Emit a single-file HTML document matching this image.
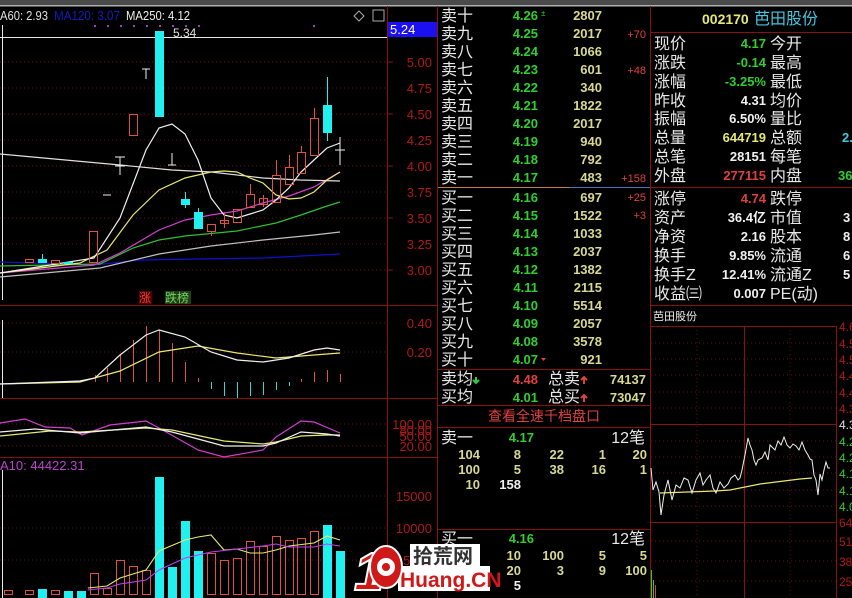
<!DOCTYPE html>
<html><head><meta charset="utf-8"><style>
html,body{margin:0;padding:0;background:#000;width:852px;height:598px;overflow:hidden}
svg{display:block}
text{font-family:"Liberation Sans","Noto Sans CJK SC",sans-serif}
.cn{font-size:16px;fill:#e8e8e8}
.g{fill:#2fcf2f;font-weight:bold;font-size:13px}
.y{fill:#d8d890;font-weight:bold;font-size:13px}
.r{fill:#e04040;font-size:11px}
.ax{fill:#b01818;font-size:13px}
.w{fill:#f0f0f0;font-weight:bold;font-size:13px}
</style></head><body>
<svg width="852" height="598" viewBox="0 0 852 598" xmlns="http://www.w3.org/2000/svg">
<rect x="0" y="0" width="852" height="598" fill="#000"/>
<rect x="0" y="0" width="852" height="5" fill="#4a4a4a"/>
<rect x="0" y="5" width="852" height="1.5" fill="#b0b0b0"/>

<!-- ========== LEFT CHART ========== -->
<g stroke="#8a1010" stroke-width="1">
<line x1="387.5" y1="6" x2="387.5" y2="598"/>
<line x1="437.5" y1="6" x2="437.5" y2="598"/>
<line x1="0" y1="305.5" x2="437" y2="305.5"/>
<line x1="0" y1="398.5" x2="437" y2="398.5"/>
<line x1="0" y1="457.5" x2="437" y2="457.5"/>
</g>
<g stroke="#6a1010" stroke-dasharray="1,3">
<line x1="0" y1="62" x2="387" y2="62"/><line x1="0" y1="88" x2="387" y2="88"/>
<line x1="0" y1="114" x2="387" y2="114"/><line x1="0" y1="140" x2="387" y2="140"/>
<line x1="0" y1="166" x2="387" y2="166"/><line x1="0" y1="192" x2="387" y2="192"/>
<line x1="0" y1="218" x2="387" y2="218"/><line x1="0" y1="244" x2="387" y2="244"/>
<line x1="0" y1="270" x2="387" y2="270"/>
<line x1="0" y1="323" x2="387" y2="323"/><line x1="0" y1="352" x2="387" y2="352"/>
<line x1="0" y1="424" x2="387" y2="424"/><line x1="0" y1="446" x2="387" y2="446"/>
<line x1="0" y1="496" x2="387" y2="496"/><line x1="0" y1="528" x2="387" y2="528"/><line x1="0" y1="560" x2="387" y2="560"/>
</g>
<g stroke="#8a1010"><line x1="387" y1="62" x2="393" y2="62"/><line x1="387" y1="114" x2="393" y2="114"/><line x1="387" y1="166" x2="393" y2="166"/><line x1="387" y1="218" x2="393" y2="218"/><line x1="387" y1="270" x2="393" y2="270"/></g>

<text x="0" y="20" fill="#e0e0e0" font-size="13" textLength="48" lengthAdjust="spacingAndGlyphs">A60: 2.93</text>
<text x="54" y="20" fill="#1818c0" font-size="13" textLength="66" lengthAdjust="spacingAndGlyphs">MA120: 3.07</text>
<text x="126" y="20" fill="#f0f0f0" font-size="13" textLength="64" lengthAdjust="spacingAndGlyphs">MA250: 4.12</text>
<g fill="none" stroke="#aaa"><path d="M359 11 l5 5 -5 5 -5 -5z"/><rect x="373" y="10" width="11" height="11"/></g>
<g fill="#a040c0"><rect x="94" y="25" width="2" height="2"/><rect x="107" y="25" width="2" height="2"/><rect x="120" y="25" width="2" height="2"/><rect x="133" y="25" width="2" height="2"/><rect x="146" y="25" width="2" height="2"/><rect x="159" y="25" width="2" height="2"/><rect x="172" y="25" width="2" height="2"/><rect x="185" y="25" width="2" height="2"/><rect x="198" y="25" width="2" height="2"/><rect x="313" y="25" width="2" height="2"/></g>
<line x1="0" y1="37.5" x2="387" y2="37.5" stroke="#e8e8e8"/>
<rect x="388" y="22" width="49" height="15" fill="#1a10f0"/>
<text x="390" y="34" fill="#fff" font-size="13">5.24</text>
<text x="173" y="37" fill="#e0e0e0" font-size="12">5.34</text>
<line x1="2.5" y1="25" x2="2.5" y2="300" stroke="#e8e8e8"/>
<line x1="2.5" y1="320" x2="2.5" y2="398" stroke="#e8e8e8"/>
<line x1="2.5" y1="470" x2="2.5" y2="598" stroke="#e8e8e8"/>

<g class="ax" text-anchor="end">
<text x="432" y="67">5.00</text><text x="432" y="93">4.75</text><text x="432" y="119">4.50</text><text x="432" y="145">4.25</text><text x="432" y="171">4.00</text><text x="432" y="197">3.75</text><text x="432" y="223">3.50</text><text x="432" y="249">3.25</text><text x="432" y="275">3.00</text>
<text x="432" y="328">0.40</text><text x="432" y="357">0.20</text>
<text x="432" y="429">100.00</text><text x="432" y="435">80.00</text><text x="432" y="441">50.00</text><text x="432" y="451">20.00</text>
<text x="432" y="501">15000</text><text x="432" y="533">10000</text><text x="432" y="565">5000</text>
</g>

<g fill="none" stroke-width="1.2">
<polyline stroke="#1010d0" points="0,262 94,265 140,260 200,259 263,258 340,254"/>
<polyline stroke="#c0c0c0" points="0,277 100,268 159,254 211,246 263,240 314,235 340,232"/>
<polyline stroke="#30c030" points="0,266 100,264 133,248 159,240 185,236 237,231 276,223 301,215 327,206 340,202"/>
<polyline stroke="#d040d0" points="0,273 94,265 120,253 159,230 185,220 211,215 237,211 263,203 289,196 314,187 340,172"/>
<polyline stroke="#e0e0e0" points="0,154 120,165 172,170 211,172 263,178 300,180 340,181"/>
<polyline stroke="#e8e870" points="0,273 80,263 107,250 133,215 159,190 185,178 211,172 224,171 237,172 250,178 263,183 276,195 289,199 301,198 314,192 327,180 340,172"/>
<polyline stroke="#f0f0f0" points="0,273 94,258 120,218 146,150 159,128 172,124 185,134 198,160 211,198 224,215 237,218 250,214 263,210 276,200 289,188 301,172 314,160 327,148 340,143"/>
</g>
<g fill="none" stroke="#e05040" stroke-width="1">
<rect x="25.5" y="259.5" width="8" height="3"/><rect x="51.5" y="260.5" width="8" height="3"/>
<rect x="89.5" y="231.5" width="8" height="31"/>
<rect x="129.5" y="114.5" width="8" height="21"/>
<rect x="207.5" y="224.5" width="8" height="7"/><line x1="211.5" y1="231" x2="211.5" y2="236"/>
<rect x="220.5" y="220.5" width="8" height="3"/><line x1="224.5" y1="212" x2="224.5" y2="228"/>
<rect x="233.5" y="209.5" width="8" height="13"/>
<rect x="246.5" y="194.5" width="8" height="13"/><line x1="250.5" y1="184" x2="250.5" y2="194"/>
<rect x="259.5" y="198.5" width="8" height="6"/><line x1="263.5" y1="195" x2="263.5" y2="207"/>
<rect x="272.5" y="175.5" width="8" height="27"/><line x1="276.5" y1="160" x2="276.5" y2="175"/>
<rect x="285.5" y="167.5" width="8" height="17"/><line x1="289.5" y1="155" x2="289.5" y2="167"/>
<rect x="297.5" y="152.5" width="8" height="21"/><line x1="301.5" y1="146" x2="301.5" y2="152"/>
<rect x="310.5" y="118.5" width="8" height="37"/><line x1="314.5" y1="108" x2="314.5" y2="118"/>
</g>
<g fill="#20f0f0">
<rect x="38" y="259" width="9" height="4"/><line x1="42.5" y1="254" x2="42.5" y2="259" stroke="#20f0f0"/>
<rect x="64" y="262" width="9" height="2"/>
<rect x="155" y="31" width="9" height="86"/>
<rect x="181" y="199" width="9" height="6"/><line x1="185.5" y1="192" x2="185.5" y2="208" stroke="#20f0f0"/>
<rect x="194" y="212" width="9" height="17"/><line x1="198.5" y1="208" x2="198.5" y2="212" stroke="#20f0f0"/>
<rect x="323" y="105" width="9" height="28"/><line x1="327.5" y1="77" x2="327.5" y2="141" stroke="#20f0f0"/>
</g>
<g stroke="#f0f0f0" fill="none">
<path d="M103 195h8"/><path d="M115 157h10M120 157v18M115 166h10"/><path d="M142 69h8M146 69v10"/><path d="M168 165h8M172 153v12"/><path d="M335 150h10M340 137v28"/>
</g>
<rect x="139" y="291" width="13" height="13" fill="#500000"/><text x="139" y="302" fill="#e04040" font-size="12">涨</text>
<rect x="165" y="291" width="26" height="13" fill="#204010"/><text x="165" y="302" fill="#70d070" font-size="12">跌榜</text>

<g stroke="#e05040">
<line x1="95.5" y1="382" x2="95.5" y2="375"/><line x1="107.5" y1="382" x2="107.5" y2="368"/><line x1="120.5" y1="382" x2="120.5" y2="354"/><line x1="133.5" y1="382" x2="133.5" y2="340"/><line x1="146.5" y1="382" x2="146.5" y2="326"/><line x1="159.5" y1="382" x2="159.5" y2="330"/><line x1="172.5" y1="382" x2="172.5" y2="343"/><line x1="185.5" y1="382" x2="185.5" y2="362"/><line x1="198.5" y1="382" x2="198.5" y2="378"/>
<line x1="301.5" y1="382" x2="301.5" y2="379"/><line x1="314.5" y1="382" x2="314.5" y2="372"/><line x1="327.5" y1="382" x2="327.5" y2="370"/><line x1="340.5" y1="382" x2="340.5" y2="374"/>
</g>
<g stroke="#30d8d8">
<line x1="211.5" y1="382" x2="211.5" y2="389"/><line x1="224.5" y1="382" x2="224.5" y2="396"/><line x1="237.5" y1="382" x2="237.5" y2="398"/><line x1="250.5" y1="382" x2="250.5" y2="396"/><line x1="263.5" y1="382" x2="263.5" y2="395"/><line x1="276.5" y1="382" x2="276.5" y2="390"/><line x1="289.5" y1="382" x2="289.5" y2="386"/>
</g>
<g fill="none" stroke-width="1.2">
<polyline stroke="#e8e870" points="0,384 80,382 120,371 159,352 198,346 237,353 276,358 314,355 340,353"/>
<polyline stroke="#f0f0f0" points="0,384 80,381 95,378 120,355 146,335 159,330 185,337 211,352 237,360 263,362 289,358 314,350 327,348 340,350"/>
</g>
<g fill="none" stroke-width="1.2">
<polyline stroke="#d040d0" points="0,423 25,419 45,427 70,428 82,435 110,425 146,421 159,428 198,450 224,457 263,450 276,437 301,421 314,422 340,433"/>
<polyline stroke="#e8e870" points="0,436 50,431 80,432 146,428 172,430 224,441 263,444 276,442 301,436 327,435 340,435"/>
<polyline stroke="#f0f0f0" points="0,432 35,429 80,433 146,427 172,432 224,446 263,446 276,443 301,432 327,434 340,436"/>
</g>
<text x="0" y="470" fill="#c040d0" font-size="13">A10: 44422.31</text>
<g fill="none" stroke="#e05040">
<rect x="4.5" y="590.5" width="8" height="4"/><rect x="25.5" y="590.5" width="8" height="4"/><rect x="51.5" y="590.5" width="8" height="4"/>
<rect x="90.5" y="573.5" width="8" height="21"/><rect x="103.5" y="588.5" width="8" height="6"/><rect x="116.5" y="560.5" width="8" height="34"/><rect x="129.5" y="566.5" width="8" height="28"/><rect x="142.5" y="570.5" width="8" height="24"/>
<rect x="207.5" y="553.5" width="8" height="41"/><rect x="220.5" y="560.5" width="8" height="34"/><rect x="233.5" y="558.5" width="8" height="36"/><rect x="246.5" y="541.5" width="8" height="53"/><rect x="259.5" y="546.5" width="8" height="48"/><rect x="272.5" y="536.5" width="8" height="58"/><rect x="285.5" y="540.5" width="8" height="54"/><rect x="297.5" y="538.5" width="8" height="56"/><rect x="310.5" y="531.5" width="8" height="63"/>
</g>
<g fill="#20f0f0">
<rect x="38" y="589" width="9" height="9"/><rect x="64" y="591" width="9" height="7"/><rect x="77" y="591" width="9" height="7"/>
<rect x="155" y="477" width="9" height="121"/><rect x="168" y="567" width="9" height="31"/><rect x="181" y="521" width="9" height="77"/><rect x="194" y="551" width="9" height="47"/><rect x="323" y="525" width="9" height="73"/><rect x="336" y="551" width="9" height="47"/>
</g>
<g fill="none" stroke-width="1.1">
<polyline stroke="#e8e870" points="88,588 107,586 120,578 146,570 159,551 185,540 198,537 211,535 224,550 237,549 250,553 263,553 276,550 289,546 314,543 327,536 340,540"/>
<polyline stroke="#c040f0" points="88,590 107,588 120,584 146,580 159,570 185,558 211,552 237,549 263,546 276,544 289,547 314,547 327,544 340,546"/>
</g>

<!-- ========== ORDER BOOK ========== -->
<g stroke="#8a1010"><line x1="650.5" y1="6" x2="650.5" y2="598"/><line x1="438" y1="369.5" x2="650" y2="369.5"/><line x1="438" y1="405.5" x2="650" y2="405.5"/><line x1="438" y1="427.5" x2="650" y2="427.5"/><line x1="438" y1="529.5" x2="650" y2="529.5"/></g>
<line x1="438" y1="187.5" x2="570" y2="187.5" stroke="#c08040"/><line x1="570" y1="187.5" x2="650" y2="187.5" stroke="#5070c0"/>
<g class="cn">
<text x="441" y="21">卖十</text><text x="441" y="39">卖九</text><text x="441" y="57">卖八</text><text x="441" y="75">卖七</text><text x="441" y="93">卖六</text><text x="441" y="111">卖五</text><text x="441" y="129">卖四</text><text x="441" y="147">卖三</text><text x="441" y="165">卖二</text><text x="441" y="183">卖一</text>
<text x="441" y="203">买一</text><text x="441" y="221">买二</text><text x="441" y="239">买三</text><text x="441" y="257">买四</text><text x="441" y="275">买五</text><text x="441" y="293">买六</text><text x="441" y="311">买七</text><text x="441" y="329">买八</text><text x="441" y="347">买九</text><text x="441" y="365">买十</text>
<text x="441" y="384">卖均</text><text x="441" y="402">买均</text>
<text x="548" y="384">总卖</text><text x="548" y="402">总买</text>
<text x="441" y="443">卖一</text><text x="441" y="544">买一</text>
<text x="645" y="443" text-anchor="end">12笔</text><text x="645" y="544" text-anchor="end">12笔</text>
</g>
<g class="g" text-anchor="end">
<text x="538" y="20">4.26</text><text x="538" y="38">4.25</text><text x="538" y="56">4.24</text><text x="538" y="74">4.23</text><text x="538" y="92">4.22</text><text x="538" y="110">4.21</text><text x="538" y="128">4.20</text><text x="538" y="146">4.19</text><text x="538" y="164">4.18</text><text x="538" y="182">4.17</text>
<text x="538" y="202">4.16</text><text x="538" y="220">4.15</text><text x="538" y="238">4.14</text><text x="538" y="256">4.13</text><text x="538" y="274">4.12</text><text x="538" y="292">4.11</text><text x="538" y="310">4.10</text><text x="538" y="328">4.09</text><text x="538" y="346">4.08</text><text x="538" y="364">4.07</text>
<text x="538" y="402">4.01</text><text x="534" y="442">4.17</text><text x="534" y="543">4.16</text>
</g>
<text x="538" y="384" text-anchor="end" fill="#e04040" font-weight="bold" font-size="13">4.48</text>
<text x="541" y="16" fill="#2fcf2f" font-size="8">±</text>
<path d="M541 358h5l-2.5 3z" fill="#e04040"/>
<path d="M476 377v6M473 380l3 3 3-3" stroke="#2fcf2f" stroke-width="2" fill="none"/>
<path d="M584 384v-7M581 380l3-3 3 3" stroke="#e04040" stroke-width="2" fill="none"/>
<path d="M584 402v-7M581 398l3-3 3 3" stroke="#e04040" stroke-width="2" fill="none"/>
<g class="y" text-anchor="end">
<text x="602" y="20">2807</text><text x="602" y="38">2017</text><text x="602" y="56">1066</text><text x="602" y="74">601</text><text x="602" y="92">340</text><text x="602" y="110">1822</text><text x="602" y="128">2017</text><text x="602" y="146">940</text><text x="602" y="164">792</text><text x="602" y="182">483</text>
<text x="602" y="202">697</text><text x="602" y="220">1522</text><text x="602" y="238">1033</text><text x="602" y="256">2037</text><text x="602" y="274">1382</text><text x="602" y="292">2115</text><text x="602" y="310">5514</text><text x="602" y="328">2057</text><text x="602" y="346">3578</text><text x="602" y="364">921</text>
<text x="646" y="384">74137</text><text x="646" y="402">73047</text>
</g>
<g class="r" text-anchor="end"><text x="646" y="38">+70</text><text x="646" y="74">+48</text><text x="646" y="182">+158</text><text x="646" y="201">+25</text><text x="646" y="219">+3</text></g>
<text x="544" y="421" text-anchor="middle" fill="#e04040" font-size="14">查看全速千档盘口</text>
<g class="y" text-anchor="end">
<text x="480" y="459">104</text><text x="521" y="459">8</text><text x="564" y="459">22</text><text x="606" y="459">1</text><text x="647" y="459">20</text>
<text x="480" y="474">100</text><text x="521" y="474">5</text><text x="564" y="474">38</text><text x="606" y="474">16</text><text x="647" y="474">1</text>
<text x="480" y="489">10</text>
<text x="521" y="560">10</text><text x="564" y="560">100</text><text x="606" y="560">5</text><text x="647" y="560">5</text>
<text x="521" y="575">20</text><text x="564" y="575">3</text><text x="606" y="575">9</text><text x="647" y="575">100</text>
</g>
<text x="521" y="489" class="w" text-anchor="end">158</text>
<text x="521" y="590" class="w" text-anchor="end">5</text>

<!-- ========== INFO PANEL ========== -->
<g stroke="#8a1010"><line x1="650" y1="32.5" x2="852" y2="32.5"/><line x1="650" y1="187.5" x2="852" y2="187.5"/><line x1="650" y1="305.5" x2="852" y2="305.5"/></g>
<text x="702" y="24" fill="#e8e870" font-weight="bold" font-size="14">002170</text>
<text x="754" y="24" fill="#40c8e0" font-size="16">芭田股份</text>
<g class="cn">
<text x="654" y="49">现价</text><text x="654" y="68">涨跌</text><text x="654" y="87">涨幅</text><text x="654" y="106">昨收</text><text x="654" y="124">振幅</text><text x="654" y="143">总量</text><text x="654" y="162">总笔</text><text x="654" y="181">外盘</text>
<text x="654" y="204">涨停</text><text x="654" y="223">资产</text><text x="654" y="242">净资</text><text x="654" y="261">换手</text><text x="654" y="280">换手Z</text><text x="654" y="299">收益㈢</text>
<text x="770" y="49">今开</text><text x="770" y="68">最高</text><text x="770" y="87">最低</text><text x="770" y="106">均价</text><text x="770" y="124">量比</text><text x="770" y="143">总额</text><text x="770" y="162">每笔</text><text x="770" y="181">内盘</text>
<text x="770" y="204">跌停</text><text x="770" y="223">市值</text><text x="770" y="242">股本</text><text x="770" y="261">流通</text><text x="770" y="280">流通Z</text><text x="770" y="299">PE(动)</text>
</g>
<g text-anchor="end" font-weight="bold" font-size="13">
<text x="766" y="48" fill="#2fcf2f">4.17</text><text x="766" y="67" fill="#2fcf2f">-0.14</text><text x="766" y="86" fill="#2fcf2f">-3.25%</text><text x="766" y="105" fill="#f0f0f0">4.31</text><text x="766" y="123" fill="#f0f0f0">6.50%</text><text x="766" y="142" fill="#e8e870">644719</text><text x="766" y="161" fill="#f0f0f0">28151</text><text x="766" y="180" fill="#e04040">277115</text>
<text x="766" y="203" fill="#e04040">4.74</text><text x="766" y="222" fill="#f0f0f0">36.4亿</text><text x="766" y="241" fill="#f0f0f0">2.16</text><text x="766" y="260" fill="#f0f0f0">9.85%</text><text x="766" y="279" fill="#f0f0f0">12.41%</text><text x="766" y="298" fill="#f0f0f0">0.007</text>
</g>
<g font-weight="bold" font-size="13">
<text x="842" y="142" fill="#40c8e0">2.</text><text x="838" y="180" fill="#2fcf2f">36</text><text x="843" y="222" fill="#f0f0f0">3</text><text x="843" y="241" fill="#f0f0f0">8</text><text x="843" y="260" fill="#f0f0f0">6</text><text x="843" y="279" fill="#f0f0f0">5</text>
</g>
<text x="653" y="320" fill="#f0f0f0" font-size="11">芭田股份</text>
<g stroke="#8a1010"><line x1="651" y1="326.5" x2="836" y2="326.5"/><line x1="651" y1="424.5" x2="836" y2="424.5"/><line x1="651" y1="522.5" x2="836" y2="522.5"/><line x1="744.5" y1="326" x2="744.5" y2="598"/><line x1="836.5" y1="326" x2="836.5" y2="598"/></g>
<g stroke="#6a1010" stroke-dasharray="1,3">
<line x1="651" y1="343" x2="836" y2="343"/><line x1="651" y1="359" x2="836" y2="359"/><line x1="651" y1="375" x2="836" y2="375"/><line x1="651" y1="392" x2="836" y2="392"/><line x1="651" y1="408" x2="836" y2="408"/><line x1="651" y1="441" x2="836" y2="441"/><line x1="651" y1="457" x2="836" y2="457"/><line x1="651" y1="473" x2="836" y2="473"/><line x1="651" y1="490" x2="836" y2="490"/><line x1="651" y1="506" x2="836" y2="506"/>
<line x1="651" y1="541" x2="836" y2="541"/><line x1="651" y1="561" x2="836" y2="561"/><line x1="651" y1="581" x2="836" y2="581"/>
<line x1="697" y1="326" x2="697" y2="598"/><line x1="790" y1="326" x2="790" y2="598"/>
</g>
<g font-size="12" fill="#b01818">
<text x="839" y="331">4.6</text><text x="839" y="348">4.5</text><text x="839" y="364">4.5</text><text x="839" y="380">4.4</text><text x="839" y="397">4.4</text><text x="839" y="413">4.3</text><text x="839" y="429" fill="#e0e0e0">4.3</text>
<text x="839" y="446" fill="#2fcf2f">4.2</text><text x="839" y="462" fill="#2fcf2f">4.2</text><text x="839" y="478" fill="#2fcf2f">4.1</text><text x="839" y="495" fill="#2fcf2f">4.1</text><text x="839" y="511" fill="#2fcf2f">4.0</text>
<text x="839" y="527">64</text><text x="839" y="546">51</text><text x="839" y="566">38</text><text x="839" y="586">25</text>
</g>
<polyline fill="none" stroke="#e8e870" stroke-width="1.2" points="660,493 715,491 730,490 760,484 800,479 812,478"/>
<polyline fill="none" stroke="#f0f0f0" stroke-width="1" points="651,468 653,490 656,482 659,492 661,515 664,495 668,480 672,500 676,485 680,488 684,478 688,480 692,493 696,480 700,473 703,485 706,480 710,475 713,488 716,493 720,482 724,488 728,484 731,478 735,475 738,480 740,478 742,470 745,455 748,438 750,445 752,450 754,460 756,465 758,460 762,458 765,452 768,460 770,445 773,448 775,450 778,441 781,445 784,437 787,445 790,448 793,444 796,446 799,450 802,442 805,450 808,455 810,459 812,460 814,475 816,480 818,495 820,474 822,480 824,470 826,462 828,468 830,468"/>
<g stroke="#2fcf2f"><line x1="651.5" y1="598" x2="651.5" y2="570"/><line x1="653.5" y1="598" x2="653.5" y2="580"/></g>
<line x1="655.5" y1="598" x2="655.5" y2="585" stroke="#e04040"/>

<!-- logo -->
<rect x="410" y="544" width="70" height="22" fill="#fff"/>
<text x="413" y="563" fill="#333" font-size="20" font-weight="bold">拾荒网</text>
<rect x="398" y="566" width="92" height="25" fill="#fff"/>
<text x="400" y="587" fill="#d01818" font-size="21" font-weight="bold">Huang.CN</text>
<text x="354" y="590" fill="#d01818" font-size="54" font-weight="bold" font-style="italic" stroke="#fff" stroke-width="2">1</text>
<ellipse cx="386" cy="567" rx="16" ry="21" fill="#d01818" stroke="#fff" stroke-width="2"/>
<circle cx="386" cy="567" r="9" fill="#fff"/>
<circle cx="386" cy="567" r="4" fill="#d01818"/>
</svg>
</body></html>
